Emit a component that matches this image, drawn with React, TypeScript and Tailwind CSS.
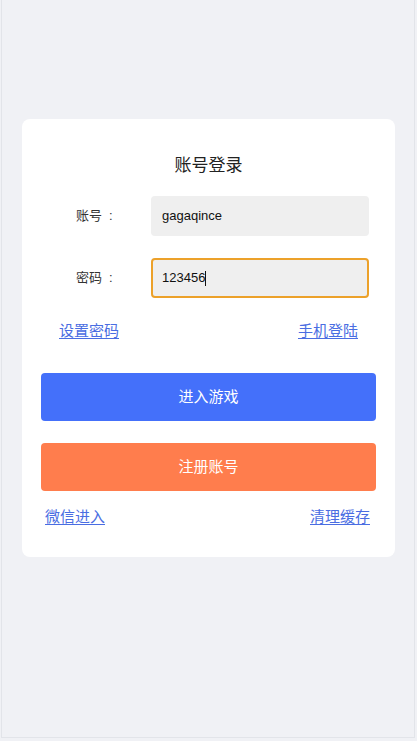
import React from 'react'

const font = { fontFamily: '"Liberation Sans", "Noto Sans CJK SC", sans-serif' }

function Field({ label, value, focused }: { label: string; value: string; focused?: boolean }) {
  return (
    <div className="flex items-center pl-[54px] pr-[26px]">
      <div className="w-[75px] text-[13px] text-[#333] leading-5">
        {label}
        <span className="ml-[7px]">:</span>
      </div>
      <div
        className={
          focused
            ? 'flex-1 h-10 flex items-center rounded-[4px] bg-[#efefef] border-2 border-[#eca12a] pl-[9px] text-[13px] text-[#111]'
            : 'flex-1 h-10 flex items-center rounded-[4px] bg-[#efefef] pl-[11px] text-[13px] text-[#111]'
        }
      >
        <span>{value}</span>
        {focused && <span className="w-px h-[15px] bg-[#111]" />}
      </div>
    </div>
  )
}

export default function App() {
  return (
    <div className="w-full h-[741px] bg-[#f0f1f5]" style={font}>
      <div className="h-[738px] ml-[1px] mr-[2px] border-l border-r border-b border-[#e2e4e9] pt-[119px] pl-[20px] pr-[19px]">
        <div className="bg-white rounded-[8px] h-[438px] pt-[34px]">
          <div className="h-[26px] leading-[26px] text-center text-[17px] text-[#222]">账号登录</div>

          <div className="mt-[17px]">
            <Field label="账号" value="gagaqince" />
          </div>
          <div className="mt-[22px]">
            <Field label="密码" value="123456" focused />
          </div>

          <div className="mt-[23px] flex justify-between px-[37px] leading-5 text-[15px] text-[#4a6de2]">
            <span className="underline underline-offset-2">设置密码</span>
            <span className="underline underline-offset-2">手机登陆</span>
          </div>

          <div className="mt-[32px] px-[19px] flex flex-col gap-[22px]">
            <button className="h-12 w-full rounded-[4px] bg-[#4470fa] text-white text-[15px] font-normal">
              进入游戏
            </button>
            <button className="h-12 w-full rounded-[4px] bg-[#ff7d4d] text-white text-[15px] font-normal">
              注册账号
            </button>
          </div>

          <div className="mt-[16px] flex justify-between pl-[23px] pr-[25px] leading-5 text-[15px] text-[#4a6de2]">
            <span className="underline underline-offset-2">微信进入</span>
            <span className="underline underline-offset-2">清理缓存</span>
          </div>
        </div>
      </div>
    </div>
  )
}
